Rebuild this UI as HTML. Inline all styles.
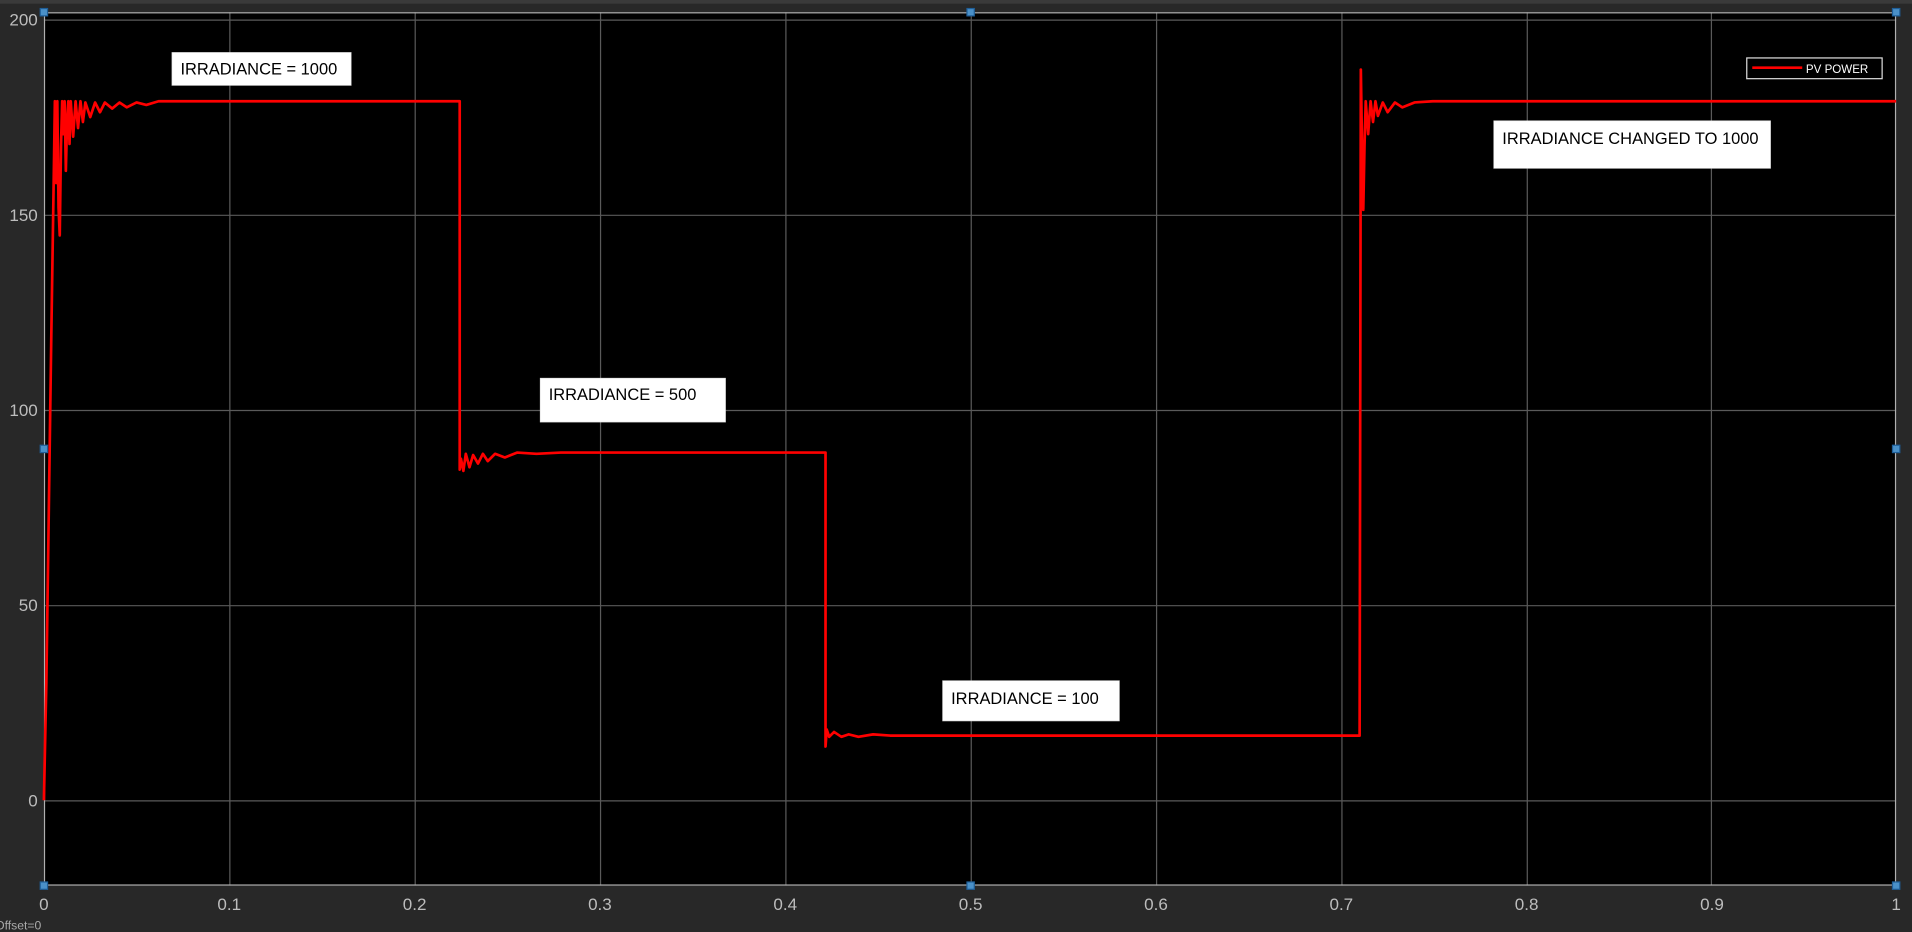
<!DOCTYPE html>
<html><head><style>html,body{margin:0;padding:0;background:#282828;overflow:hidden}svg{display:block}</style></head><body>
<svg width="1912" height="932" viewBox="0 0 1568 764" preserveAspectRatio="none" xmlns="http://www.w3.org/2000/svg" font-family="Liberation Sans, sans-serif">
<rect width="1568" height="764" fill="#282828"/>
<rect x="0" y="0" width="1568" height="3" fill="#3a3a3a"/>
<rect x="36" y="10" width="1519" height="716" fill="#000"/>
<g stroke="#5a5a5a" stroke-width="1">
<line x1="36" y1="16.5" x2="1555" y2="16.5"/><line x1="36" y1="176.5" x2="1555" y2="176.5"/><line x1="36" y1="336.5" x2="1555" y2="336.5"/><line x1="36" y1="496.5" x2="1555" y2="496.5"/><line x1="36" y1="656.5" x2="1555" y2="656.5"/>
<line x1="188.5" y1="10" x2="188.5" y2="726"/><line x1="340.5" y1="10" x2="340.5" y2="726"/><line x1="492.5" y1="10" x2="492.5" y2="726"/><line x1="644.5" y1="10" x2="644.5" y2="726"/><line x1="796.5" y1="10" x2="796.5" y2="726"/><line x1="948.5" y1="10" x2="948.5" y2="726"/><line x1="1100.5" y1="10" x2="1100.5" y2="726"/><line x1="1252.5" y1="10" x2="1252.5" y2="726"/><line x1="1403.5" y1="10" x2="1403.5" y2="726"/>
</g>
<rect x="36.5" y="10.5" width="1518" height="715" fill="none" stroke="#b0b0b0" stroke-width="1"/>
<g fill="#bdbdbd" font-size="14">
<g text-anchor="end"><text x="31" y="21">200</text><text x="31" y="181">150</text><text x="31" y="341">100</text><text x="31" y="501">50</text><text x="31" y="661">0</text></g>
<g text-anchor="middle"><text x="36" y="746">0</text><text x="188" y="746">0.1</text><text x="340" y="746">0.2</text><text x="492" y="746">0.3</text><text x="644" y="746">0.4</text><text x="796" y="746">0.5</text><text x="948" y="746">0.6</text><text x="1100" y="746">0.7</text><text x="1252" y="746">0.8</text><text x="1404" y="746">0.9</text><text x="1555" y="746">1</text></g>
</g>
<text x="-4" y="762" fill="#aaa" font-size="10">Offset=0</text>
<polyline fill="none" stroke="#f00" stroke-width="2.2" stroke-linejoin="round" points="36,656 38,560 40,420 42,280 44,150 45,83 46,150 47,83 48,170 49,193 50,120 51,83 52,110 53,83 54,140 55,100 56,83 57,118 58,83 60,112 62,83 64,105 66,83 68,100 70,84 74,96 78,84 82,92 86,84 92,89 98,84 104,88 112,84 120,86 130,83 377,83 377,385 378,376 380,386 382,372 385,383 388,373 392,380 396,372 400,378 406,372 414,375 424,371 440,372 460,371 677,371 677,612 678,598 680,604 684,600 690,604 696,602 704,604 716,602 730,603 1115,603 1116,57 1117,120 1118,172 1119,120 1120,83 1122,110 1124,83 1126,100 1128,83 1130,95 1134,84 1138,92 1144,84 1150,88 1160,84 1175,83 1555,83"/>
<g fill="#fff" stroke="#ddd" stroke-width="0.5">
<rect x="141" y="43" width="147" height="27"/><rect x="443" y="310" width="152" height="36"/><rect x="773" y="558" width="145" height="33"/><rect x="1225" y="99" width="227" height="39"/>
</g>
<g fill="#000" font-size="13.5">
<text x="148" y="61">IRRADIANCE = 1000</text><text x="450" y="328">IRRADIANCE = 500</text><text x="780" y="577">IRRADIANCE = 100</text><text x="1232" y="118">IRRADIANCE CHANGED TO 1000</text>
</g>
<rect x="1432.5" y="47.5" width="111" height="17" fill="#000" stroke="#ddd" stroke-width="1"/>
<line x1="1437" y1="55.5" x2="1478" y2="55.5" stroke="#f00" stroke-width="2.2"/>
<text x="1481" y="60" fill="#fff" font-size="9.5">PV POWER</text>
<g fill="#4a90c8" stroke="#1f5f99" stroke-width="1">
<rect x="33" y="7" width="6" height="6"/><rect x="793" y="7" width="6" height="6"/><rect x="1552" y="7" width="6" height="6"/>
<rect x="33" y="365" width="6" height="6"/><rect x="1552" y="365" width="6" height="6"/>
<rect x="33" y="723" width="6" height="6"/><rect x="793" y="723" width="6" height="6"/><rect x="1552" y="723" width="6" height="6"/>
</g>
</svg>
</body></html>
